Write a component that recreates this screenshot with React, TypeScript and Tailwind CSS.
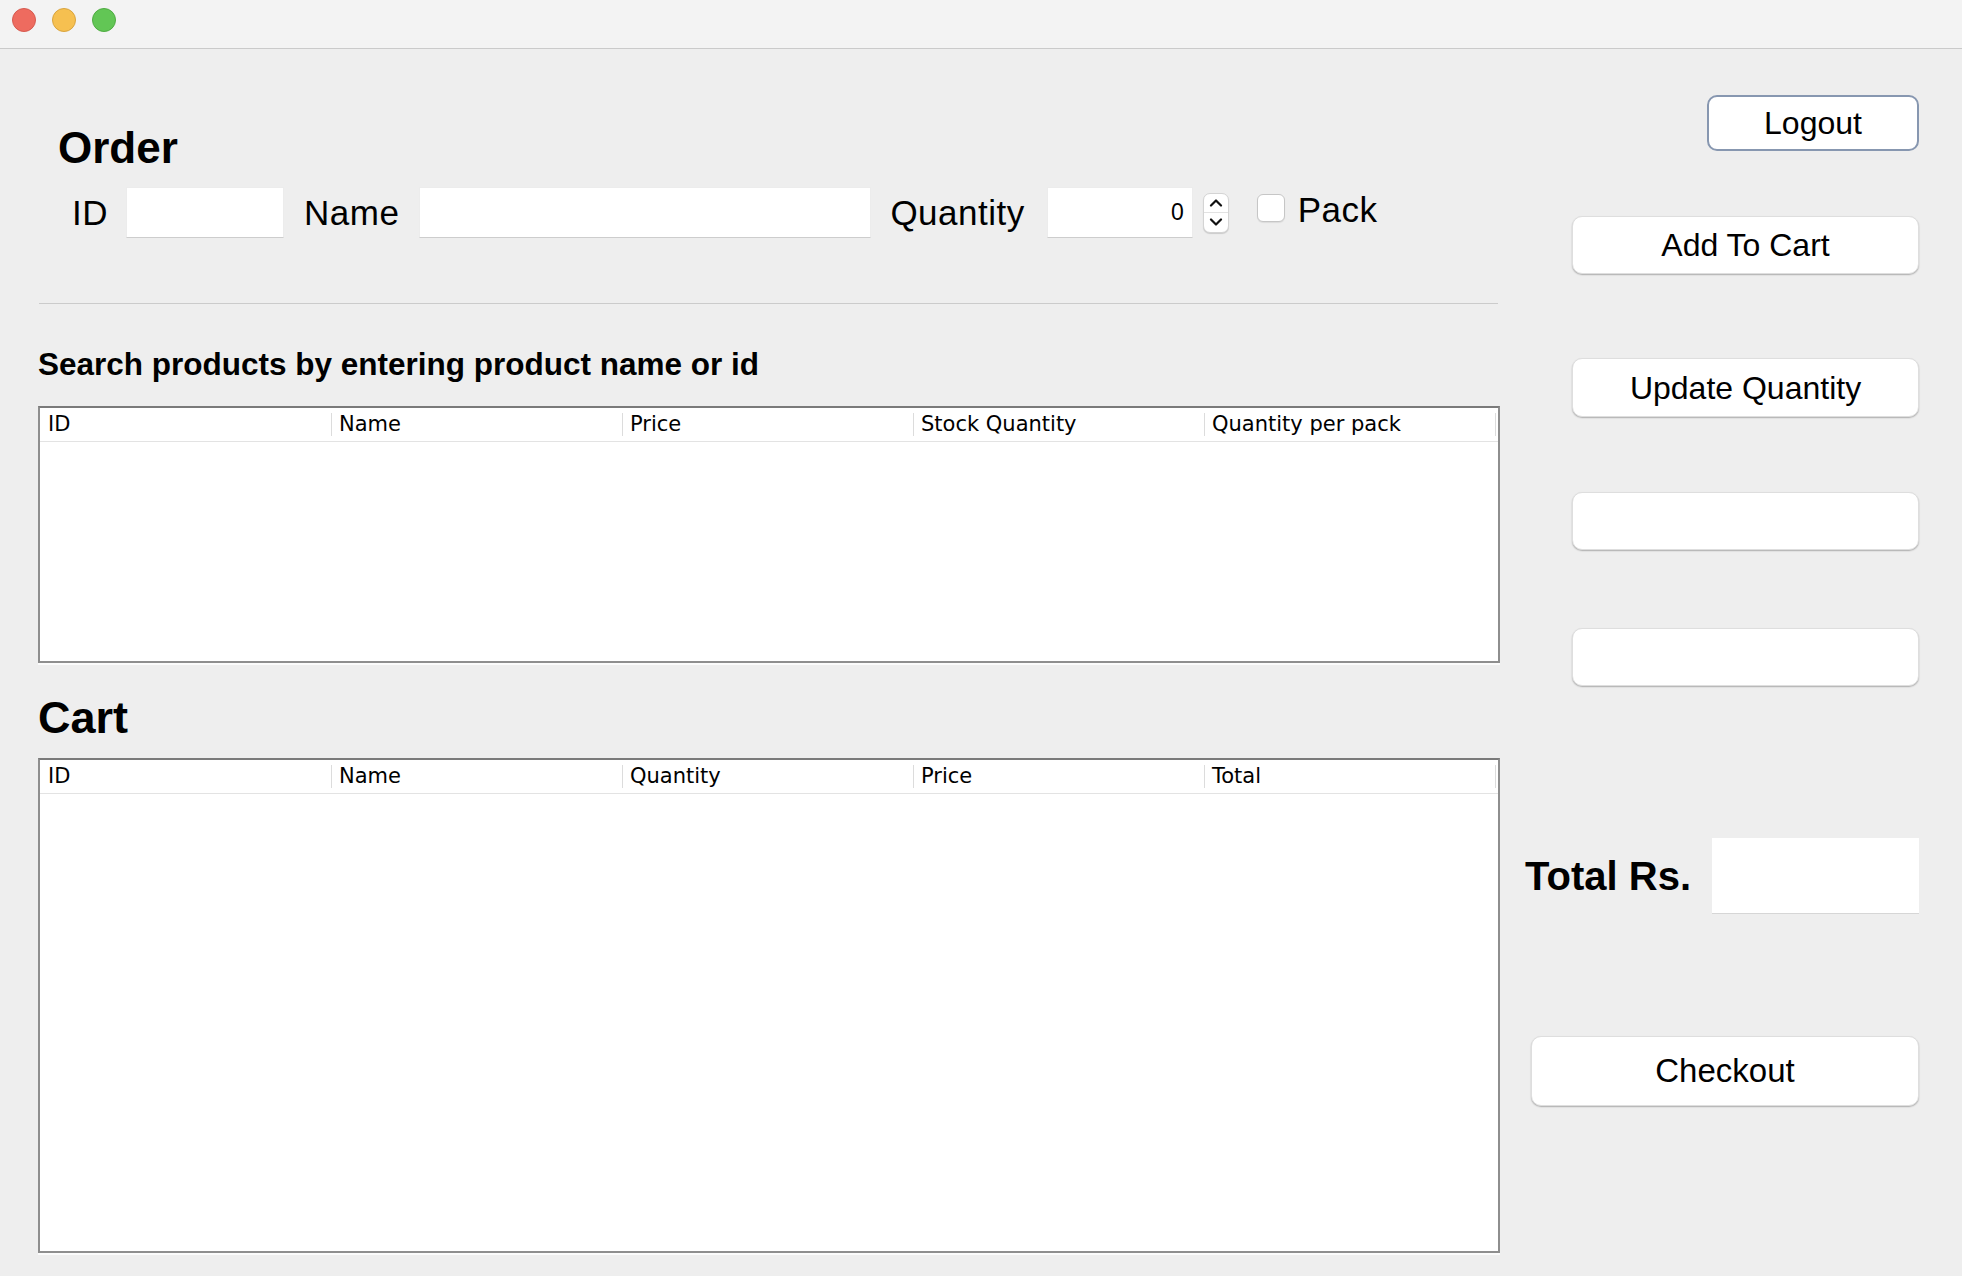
import React from "react";

const SANS = "font-['Liberation_Sans',Arial,sans-serif]";
const HEAD = "font-['DejaVu_Sans',sans-serif]";

function Table({ cols, h }: { cols: string[]; h: string }) {
  return (
    <div className={`bg-white border-2 border-[#8e8e8e] border-t-[#7a7a7a] w-[1462px] ${h} shadow-[0_2px_0_0_#fbfbfb]`}>
      <div className="flex h-[34px] border-b border-[#e3e3e3] pr-[2px]">
        {cols.map((c) => (
          <React.Fragment key={c}>
            <div className="flex-1 flex items-center pl-[7px] first:pl-[8px]">
              <span className={`${HEAD} text-[21px] leading-none text-black`}>{c}</span>
            </div>
            <div className="w-px my-[5px] bg-[#dcdcdc]" />
          </React.Fragment>
        ))}
      </div>
    </div>
  );
}

function Btn({ children, cls }: { children?: React.ReactNode; cls: string }) {
  return (
    <button
      className={`${SANS} bg-white rounded-[10px] border border-[#dedede] shadow-[0_1px_1.5px_rgba(0,0,0,0.28)] text-black flex items-center justify-center ${cls}`}
    >
      {children}
    </button>
  );
}

export default function App() {
  return (
    <div className={`${SANS} w-[1962px] h-[1276px] bg-[#eeeeee] flex flex-col overflow-hidden text-black`}>
      {/* title bar */}
      <div className="h-[49px] bg-[#f3f3f3] border-b border-[#cacaca] flex items-start pt-[8px] pl-[12px] gap-[16px]">
        <div className="w-[24px] h-[24px] rounded-full bg-[#ee6b5f] border border-[#d65a4f]" />
        <div className="w-[24px] h-[24px] rounded-full bg-[#f6c050] border border-[#d9a43e]" />
        <div className="w-[24px] h-[24px] rounded-full bg-[#62c655] border border-[#4fac42]" />
      </div>

      <div className="flex flex-1">
        {/* left column */}
        <div className="w-[1500px] pl-[38px] flex flex-col">
          <h1 className="mt-[77px] ml-[20px] h-[44px] leading-[44px] text-[44px] font-bold">Order</h1>

          <div className="mt-[17px] ml-[34px] h-[51px] flex items-center">
            <span className="text-[35px] leading-none tracking-[0.5px]">ID</span>
            <input readOnly className="ml-[18px] w-[158px] h-[51px] bg-white border border-[#ececec] border-b-[#cdcdcd] outline-none" />
            <span className="ml-[20px] text-[35px] leading-none tracking-[0.5px]">Name</span>
            <input readOnly className="ml-[20px] w-[452px] h-[51px] bg-white border border-[#ececec] border-b-[#cdcdcd] outline-none" />
            <span className="ml-[19px] text-[35px] leading-none tracking-[0.5px]">Quantity</span>
            <input
              readOnly
              value="0"
              className={`${SANS} ml-[22px] w-[146px] h-[51px] bg-white border border-[#ececec] border-b-[#cdcdcd] outline-none text-right pr-[8px] text-[23px] text-black`}
            />
            <div className="ml-[10px] w-[26px] h-[40px] rounded-[7px] bg-white border border-[#d4d4d4] shadow-[0_1px_1px_rgba(0,0,0,0.15)] flex flex-col">
              <div className="flex-1 flex items-center justify-center border-b border-[#e2e2e2]">
                <svg width="14" height="9" viewBox="0 0 14 9">
                  <path d="M2 7.5 L7 2.5 L12 7.5" fill="none" stroke="#111" strokeWidth="2.2" strokeLinecap="round" strokeLinejoin="round" />
                </svg>
              </div>
              <div className="flex-1 flex items-center justify-center">
                <svg width="14" height="9" viewBox="0 0 14 9">
                  <path d="M2 1.5 L7 6.5 L12 1.5" fill="none" stroke="#111" strokeWidth="2.2" strokeLinecap="round" strokeLinejoin="round" />
                </svg>
              </div>
            </div>
            <div className="ml-[28px] self-start mt-[7px] w-[28px] h-[28px] rounded-[6px] bg-white border border-[#c6c6c6] shadow-[0_1px_1px_rgba(0,0,0,0.08)]" />
            <span className="ml-[13px] mb-[6px] text-[35px] leading-none tracking-[0.5px]">Pack</span>
          </div>

          <div className="mt-[65px] ml-[1px] w-[1459px] h-px bg-[#cbcbcb]" />

          <h2 className="mt-[44px] h-[32px] leading-[32px] text-[31.5px] font-bold">
            Search products by entering product name or id
          </h2>

          <div className="mt-[26px]">
            <Table cols={["ID", "Name", "Price", "Stock Quantity", "Quantity per pack"]} h="h-[257px]" />
          </div>

          <h2 className="mt-[32px] h-[45px] leading-[45px] text-[45px] font-bold">Cart</h2>

          <div className="mt-[18px]">
            <Table cols={["ID", "Name", "Quantity", "Price", "Total"]} h="h-[495px]" />
          </div>
        </div>

        {/* right column */}
        <div className="flex-1 flex flex-col items-end pr-[43px]">
          <button
            className={`${SANS} mt-[46px] w-[212px] h-[56px] rounded-[10px] border-2 border-[#8797b0] bg-white text-[32px] text-black flex items-center justify-center`}
          >
            Logout
          </button>
          <Btn cls="mt-[65px] w-[347px] h-[58px] text-[32px]">Add To Cart</Btn>
          <Btn cls="mt-[84px] w-[347px] h-[59px] text-[32px]">Update Quantity</Btn>
          <Btn cls="mt-[75px] w-[347px] h-[58px]" />
          <Btn cls="mt-[78px] w-[347px] h-[58px]" />

          <div className="mt-[152px] flex items-center gap-[21px]">
            <span className="text-[40px] leading-none font-bold">Total Rs.</span>
            <div className="w-[207px] h-[76px] bg-white border-b border-[#d6d6d6]" />
          </div>

          <Btn cls="mt-[122px] w-[388px] h-[70px] text-[33px]">Checkout</Btn>
        </div>
      </div>
    </div>
  );
}
